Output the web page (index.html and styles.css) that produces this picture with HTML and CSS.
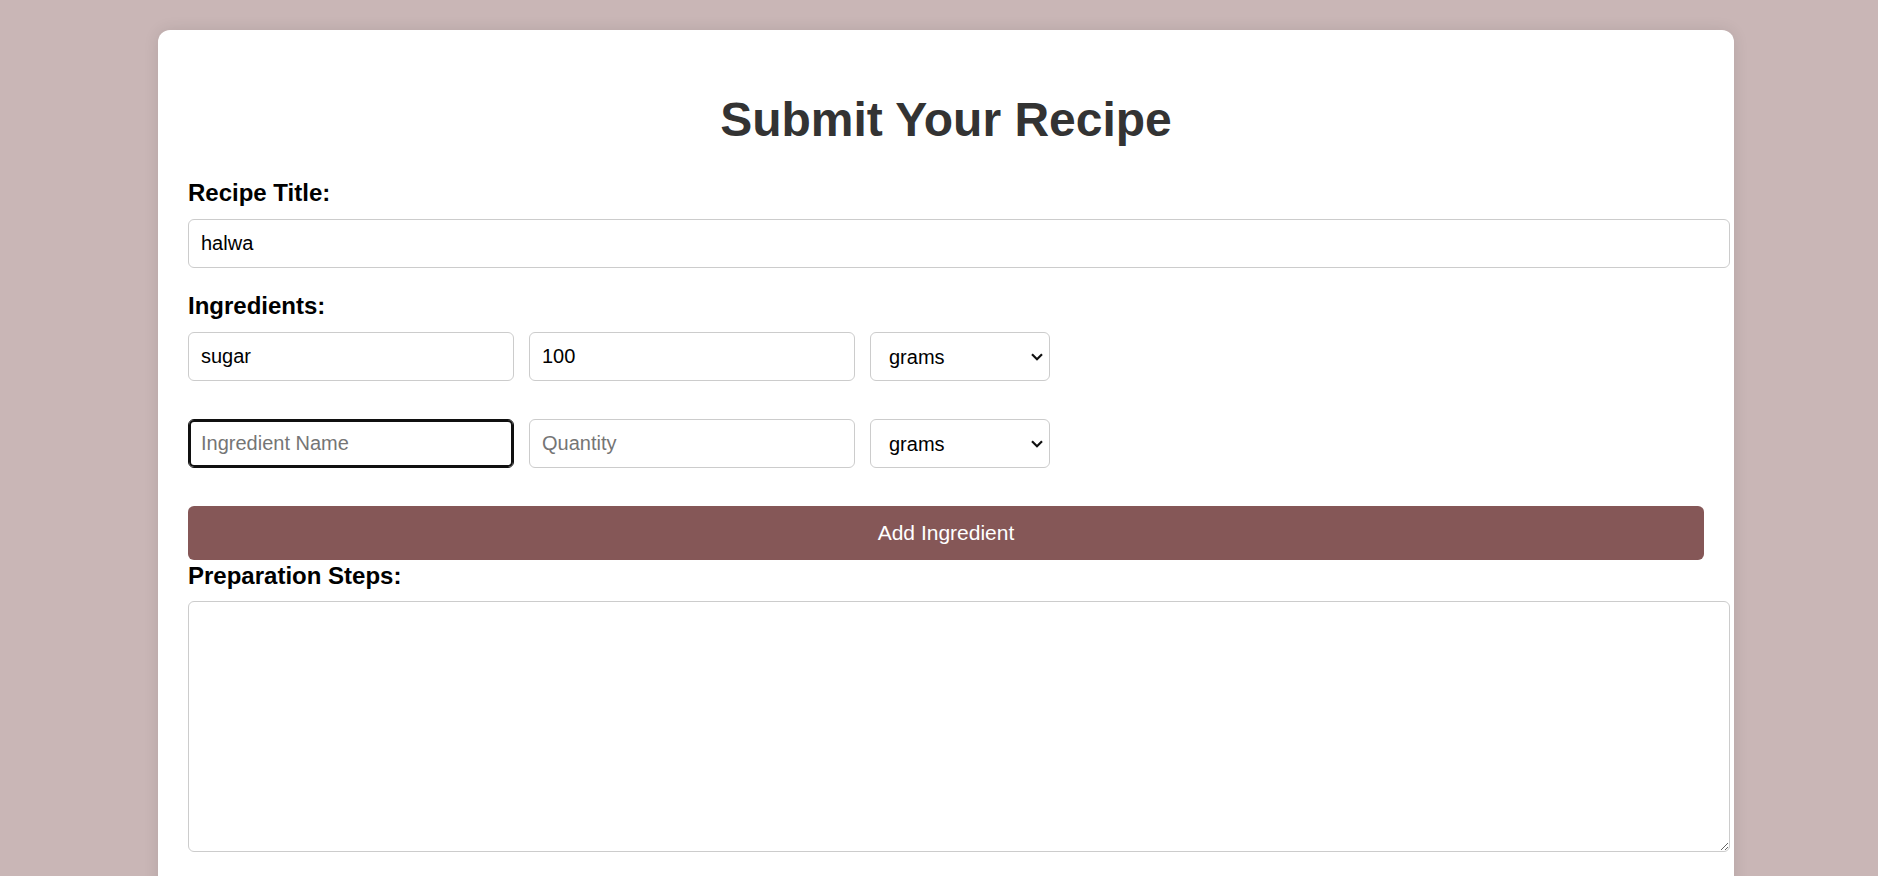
FILE: index.html
```html
<!DOCTYPE html>
<html lang="en">
<head>
<meta charset="utf-8">
<title>Submit Your Recipe</title>
<link rel="stylesheet" href="styles.css">
</head>
<body>
<div class="page">
  <div class="card">
    <h1 class="title">Submit Your Recipe</h1>
    <form class="recipe-form">
      <label class="field-label" for="title">Recipe Title:</label>
      <input class="text-input wide" id="title" type="text" value="halwa">

      <label class="field-label">Ingredients:</label>
      <div class="ingredient-row">
        <input class="text-input short" type="text" value="sugar" placeholder="Ingredient Name">
        <input class="text-input short" type="text" value="100" placeholder="Quantity">
        <span class="select-wrap">
          <select class="unit-select">
            <option>grams</option>
            <option>kg</option>
            <option>cups</option>
          </select>
          <svg class="chevron" width="12" height="8" viewBox="0 0 12 8"><path d="M1 1.2 L6 6.2 L11 1.2" fill="none" stroke="#111" stroke-width="2.2"/></svg>
        </span>
      </div>
      <div class="ingredient-row">
        <input class="text-input short focused" type="text" placeholder="Ingredient Name">
        <input class="text-input short" type="text" placeholder="Quantity">
        <span class="select-wrap">
          <select class="unit-select">
            <option>grams</option>
            <option>kg</option>
            <option>cups</option>
          </select>
          <svg class="chevron" width="12" height="8" viewBox="0 0 12 8"><path d="M1 1.2 L6 6.2 L11 1.2" fill="none" stroke="#111" stroke-width="2.2"/></svg>
        </span>
      </div>

      <button class="add-btn" type="button">Add Ingredient</button>

      <label class="field-label steps-label" for="steps">Preparation Steps:</label>
      <textarea class="text-input steps" id="steps"></textarea>
    </form>
  </div>
</div>
</body>
</html>
```

FILE: styles.css
```css
html, body {
  margin: 0;
  padding: 0;
  background: #c9b6b6;
  font-family: "Liberation Sans", Arial, sans-serif;
  overflow: hidden;
}

.page {
  padding: 30px 144px 0 158px;
}

.card {
  background: #ffffff;
  border-radius: 12px;
  box-shadow: 0 0 15px rgba(0, 0, 0, 0.1);
  padding: 30px 30px 40px;
  min-height: 900px;
}

.title {
  margin: 32px 0 32px;
  font-size: 48px;
  font-weight: bold;
  color: #333333;
  text-align: center;
  line-height: normal;
}

.recipe-form {
  display: flex;
  flex-direction: column;
  align-items: flex-start;
}

.field-label {
  display: block;
  font-size: 24px;
  font-weight: bold;
  color: #000000;
  margin-bottom: 12px;
  line-height: normal;
}

.text-input {
  font-family: "Liberation Sans", Arial, sans-serif;
  font-size: 20px;
  color: #000000;
  padding: 12px;
  border: 1px solid #cccccc;
  border-radius: 6px;
  background: #ffffff;
  line-height: normal;
  margin: 0;
  outline: none;
}

.text-input::placeholder {
  color: #757575;
}

.wide {
  width: 1516px;
  margin-bottom: 24px;
}

.ingredient-row {
  display: flex;
  gap: 15px;
  margin-bottom: 38px;
}

.short {
  width: 300px;
}

.focused {
  border-color: #101010;
  box-shadow: inset 0 0 0 2px #101010;
}

.select-wrap {
  position: relative;
  display: inline-block;
}

.unit-select {
  -webkit-appearance: none;
  appearance: none;
  width: 180px;
  height: 49px;
  font-family: "Liberation Sans", Arial, sans-serif;
  font-size: 20px;
  color: #000000;
  padding: 0 30px 0 18px;
  border: 1px solid #cccccc;
  border-radius: 6px;
  background: #ffffff;
  margin: 0;
  display: block;
}

.chevron {
  position: absolute;
  right: 7px;
  top: 21px;
  pointer-events: none;
}

.add-btn {
  width: 1516px;
  padding: 15px;
  border: none;
  border-radius: 6px;
  background: #855757;
  color: #ffffff;
  font-family: "Liberation Sans", Arial, sans-serif;
  font-size: 21px;
  line-height: normal;
  margin: 0 0 2px;
  cursor: pointer;
}

.steps-label {
  margin-bottom: 11px;
}

.steps {
  width: 1516px;
  height: 225px;
  resize: vertical;
  display: block;
}
```
